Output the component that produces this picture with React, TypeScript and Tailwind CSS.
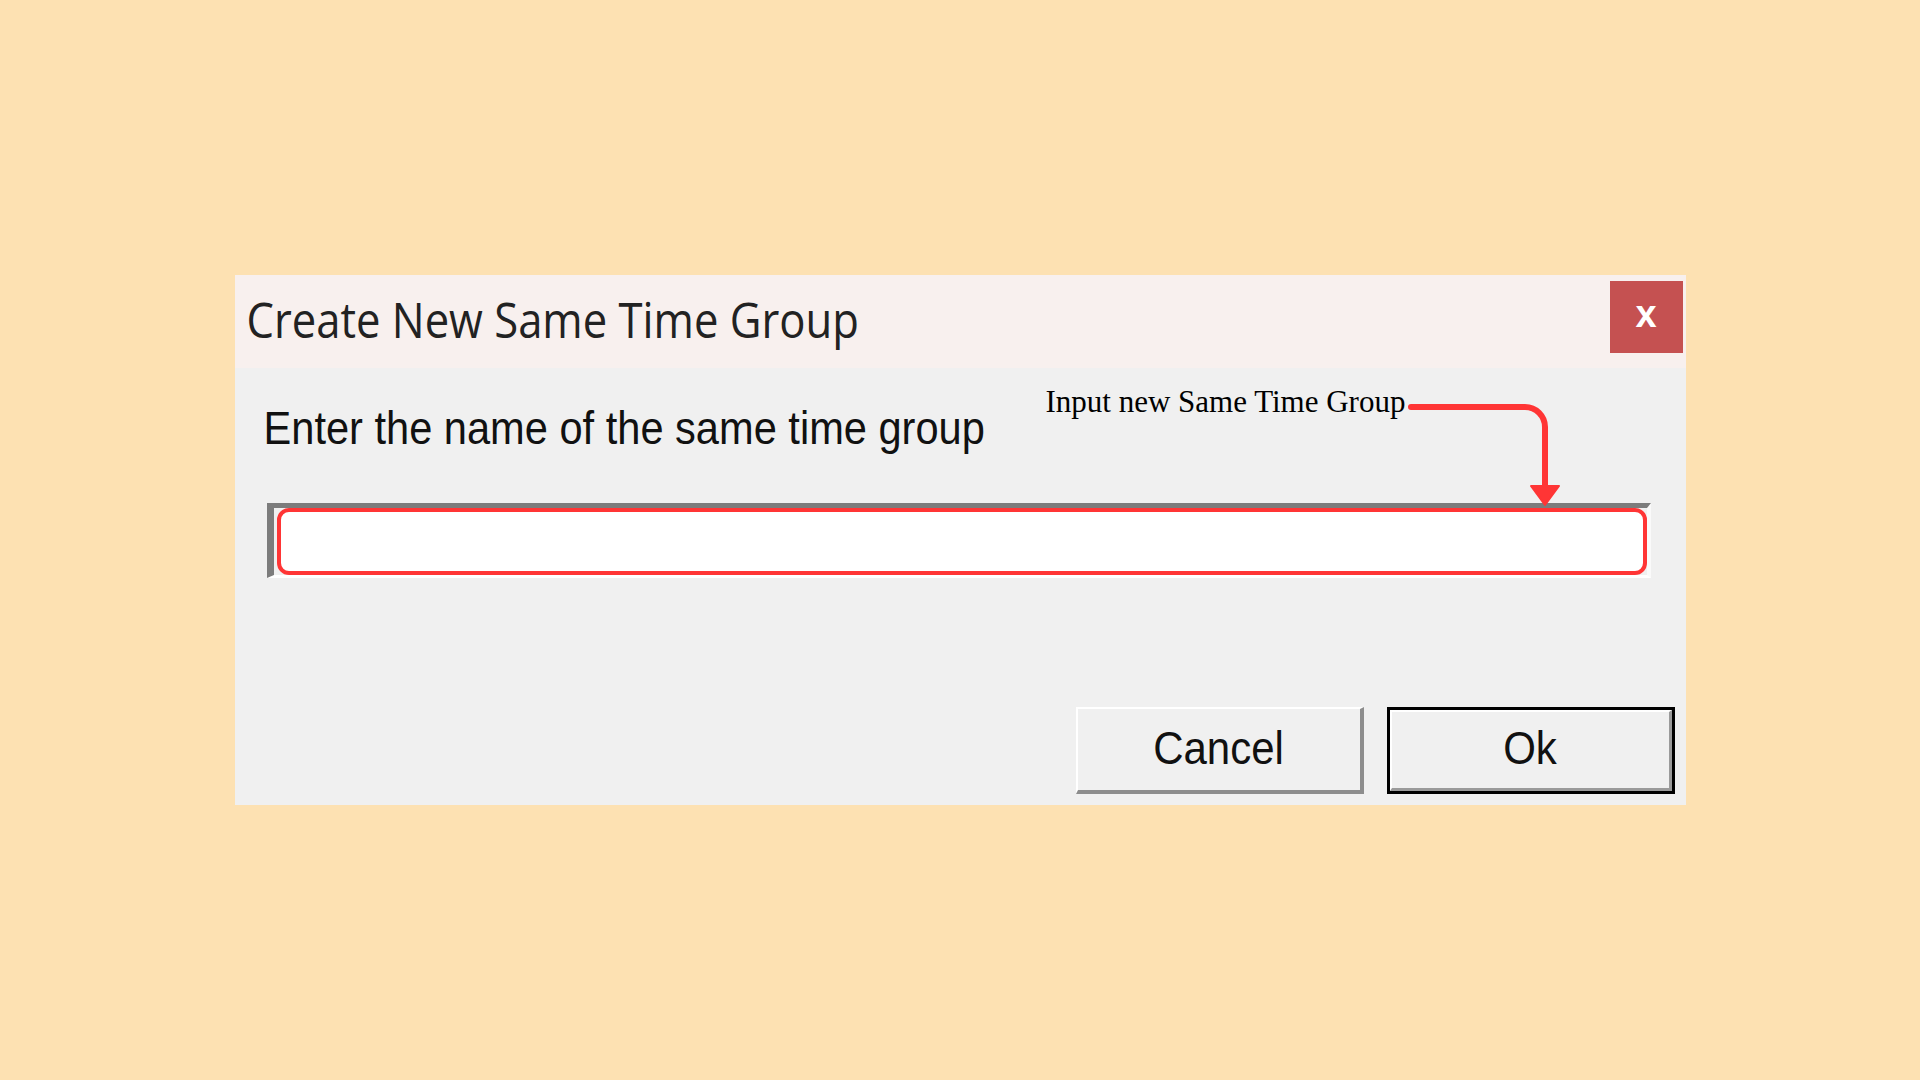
export default function App() {
  return (
    <div className="w-full h-screen bg-[#fde1b2] flex items-center justify-center">
      <div className="relative w-[1451px] h-[530px] flex flex-col bg-[#f0f0f0]">
        {/* title bar */}
        <div className="h-[93px] shrink-0 flex items-start justify-between bg-[#f8f0ee]">
          <span
            className="pt-[22px] pl-3 text-[43.6px] leading-none text-[#222] origin-center scale-y-[1.12] inline-block"
            style={{ fontFamily: '"Open Sans", "Noto Sans", sans-serif' }}
          >
            Create New Same Time Group
          </span>
          <button className="mt-[6px] mr-[3px] w-[73px] h-[72px] bg-[#c55151] flex items-center justify-center">
            <span
              className="-mt-[7px] text-[38px] font-bold leading-none text-white"
              style={{ fontFamily: '"Liberation Sans", Arial, sans-serif' }}
            >
              x
            </span>
          </button>
        </div>

        {/* body */}
        <div
          className="flex-1 flex flex-col pt-[39px] pb-[11px]"
          style={{ fontFamily: '"Liberation Sans", Arial, sans-serif' }}
        >
          <span className="ml-[29px] text-[41.6px] leading-none text-[#111] inline-block scale-y-[1.13] self-start">
            Enter the name of the same time group
          </span>

          <div className="mt-[54px] ml-[32px] mr-[35px] h-[75px] flex border-t-[5px] border-l-[7px] border-t-[#7c7c7c] border-l-[#7c7c7c] border-b-[3px] border-r-[4px] border-b-white border-r-[#fafafa] pl-[3px]">
            <div className="flex-1 bg-white border-4 border-[#ff3535] rounded-xl" />
          </div>

          <div className="mt-auto flex justify-end gap-[23px] pr-[11px]">
            <button className="w-[288px] h-[87px] flex items-center justify-center bg-[#f0f0f0] border-t-2 border-l-2 border-t-white border-l-white border-b-4 border-r-4 border-b-[#8d8d8d] border-r-[#8d8d8d]">
              <span className="text-[42px] leading-none text-[#111] inline-block scale-y-[1.12] -mt-[4px]">
                Cancel
              </span>
            </button>
            <button className="w-[288px] h-[87px] flex border-[3px] border-black">
              <div className="flex-1 flex items-center justify-center bg-[#f0f0f0] border-t-2 border-l-2 border-t-white border-l-white border-b-[3px] border-r-[3px] border-b-[#9a9a9a] border-r-[#9a9a9a]">
                <span className="text-[42px] leading-none text-[#111] inline-block scale-y-[1.12] -mt-[4px]">
                  Ok
                </span>
              </div>
            </button>
          </div>
        </div>

        {/* annotation callout */}
        <span
          className="absolute left-[811px] top-[111px] text-[31px] leading-none text-black whitespace-nowrap"
          style={{ fontFamily: '"Liberation Serif", "Times New Roman", serif' }}
        >
          Input new Same Time Group
        </span>
        <svg
          className="absolute left-0 top-0 pointer-events-none"
          width="1451"
          height="530"
          viewBox="0 0 1451 530"
        >
          <path
            d="M1176 132 H1290 A20 20 0 0 1 1310 152 V214"
            fill="none"
            stroke="#ff3535"
            strokeWidth="6"
            strokeLinecap="round"
          />
          <path d="M1296 211 L1324 211 L1310 230 Z" fill="#ff3535" stroke="#ff3535" strokeWidth="2" strokeLinejoin="round" />
        </svg>
      </div>
    </div>
  )
}
